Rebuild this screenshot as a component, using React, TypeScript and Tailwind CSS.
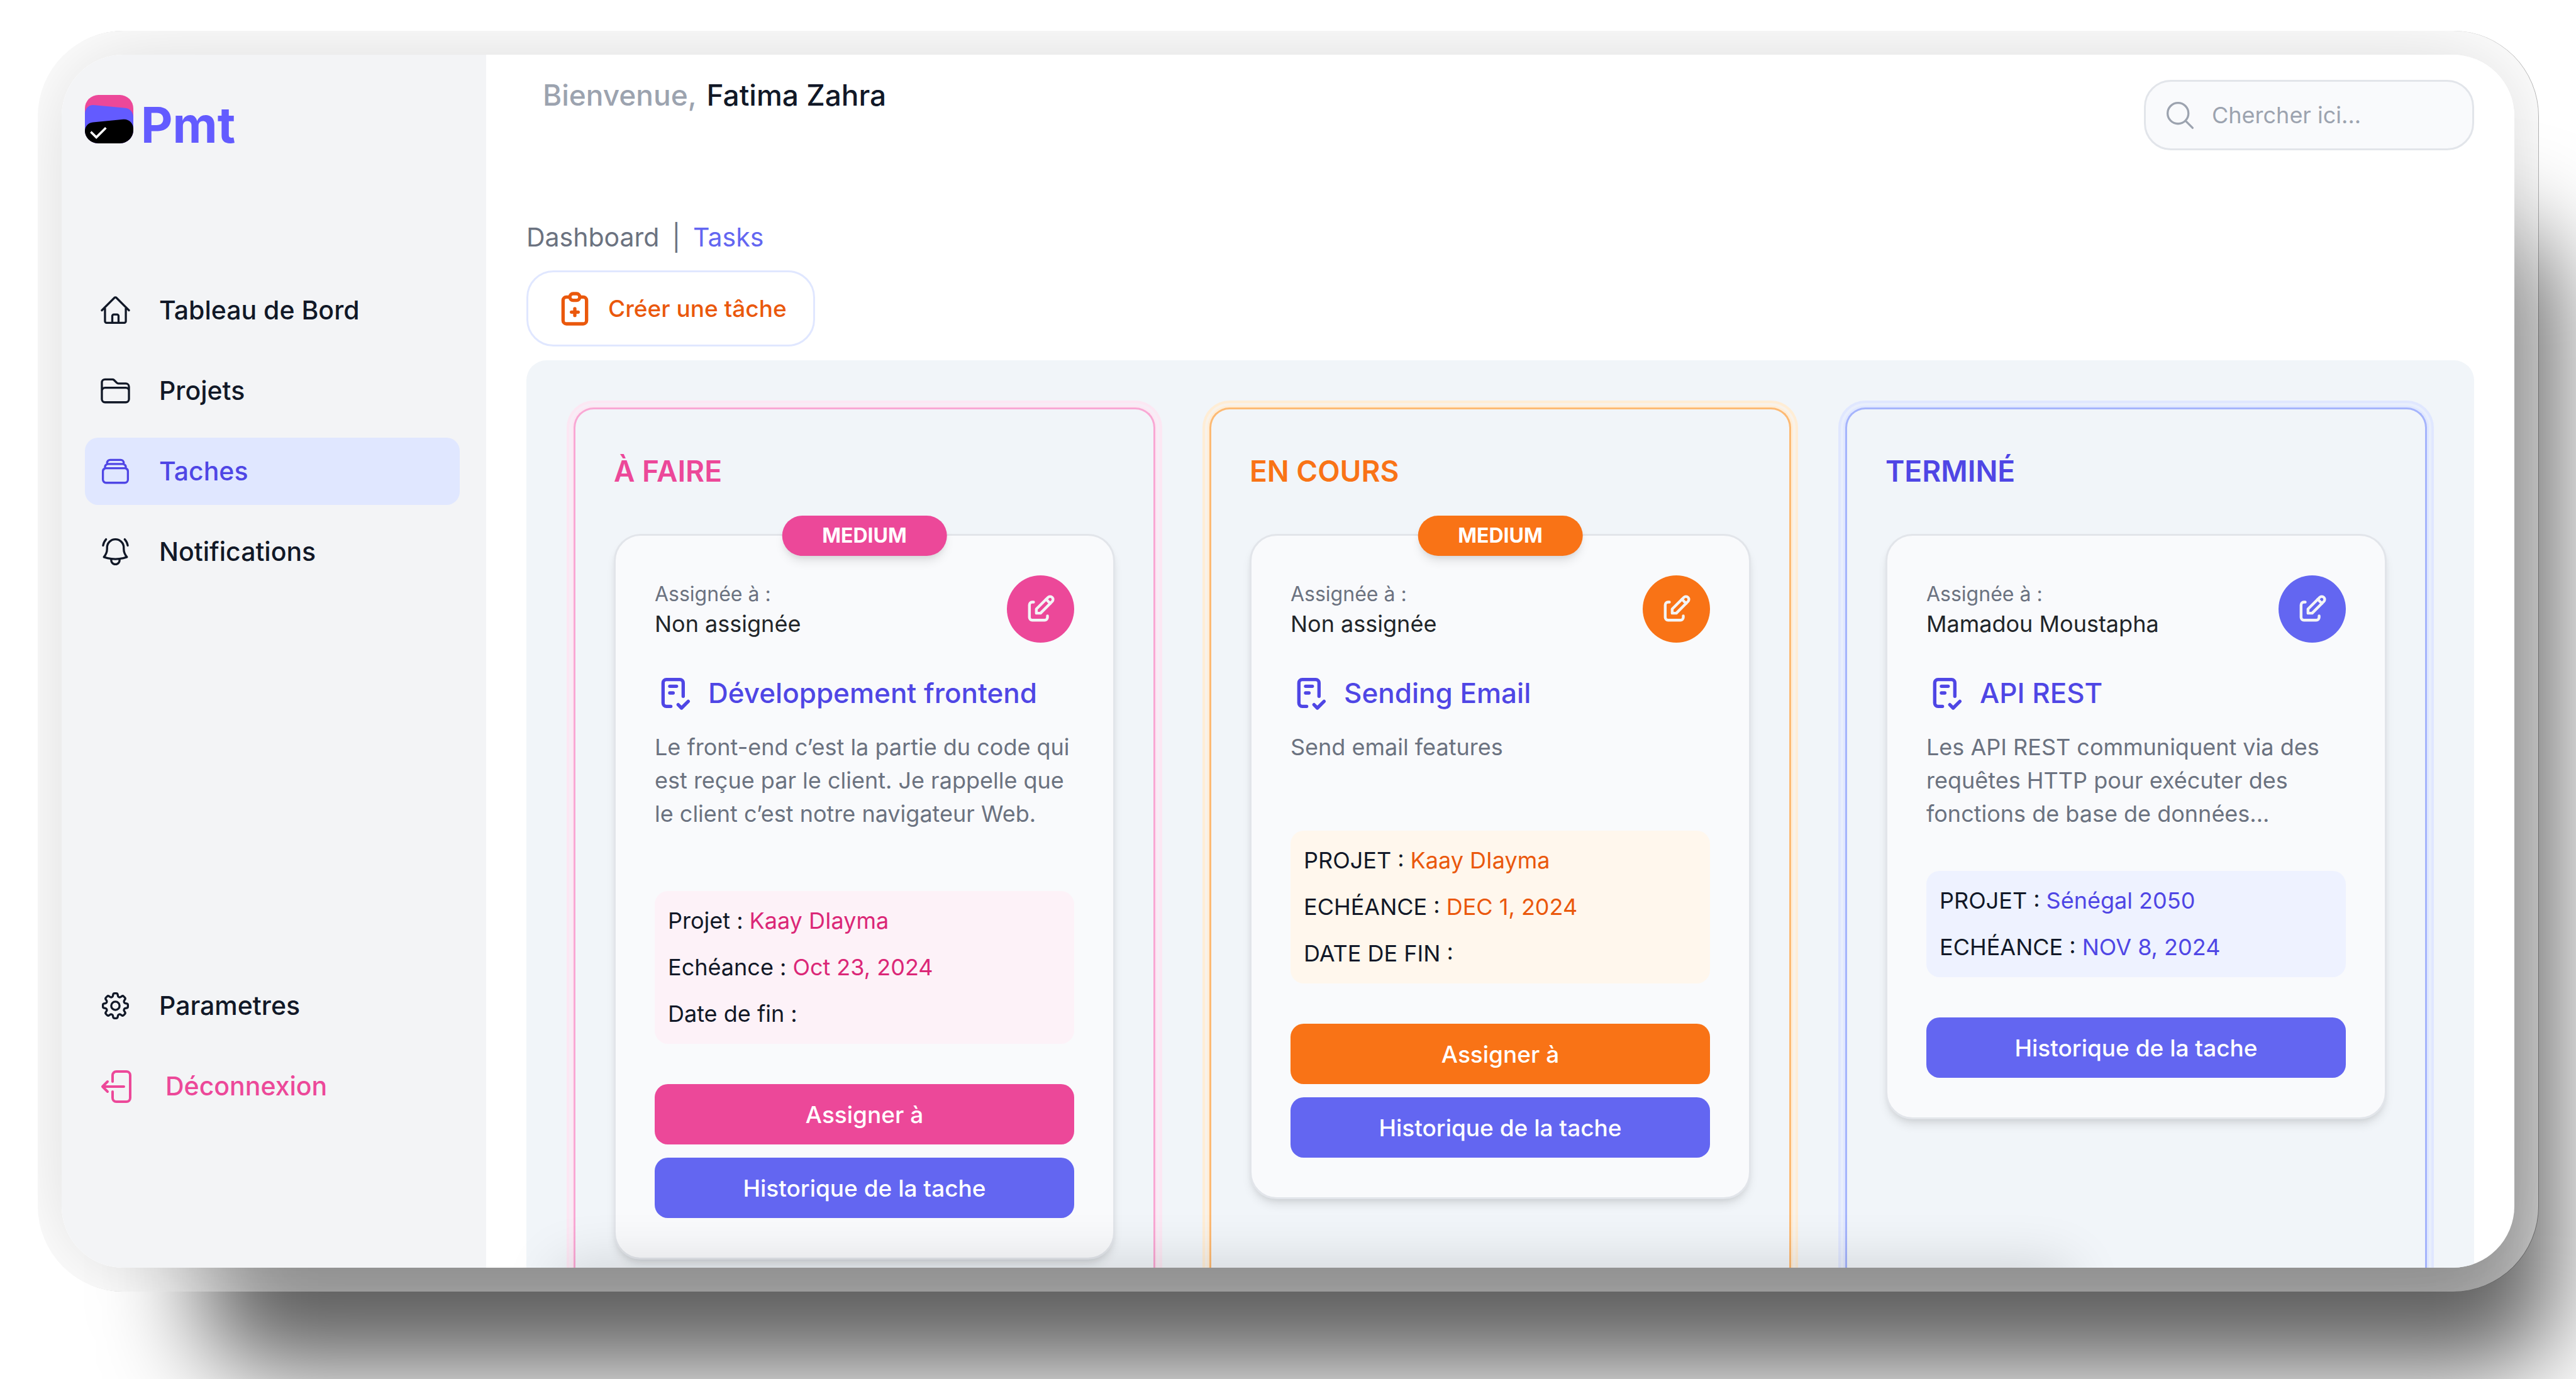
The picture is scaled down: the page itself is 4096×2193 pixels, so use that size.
import React from "react";
import {
  HiOutlineBellAlert,
  HiOutlineCog8Tooth,
  HiOutlineFolder,
  HiOutlineHome,
  HiOutlineMagnifyingGlass,
  HiOutlineRectangleStack,
} from "react-icons/hi2";
import { TbChecklist, TbClipboardPlus, TbEdit } from "react-icons/tb";
import type { IconType } from "react-icons";

type Task = {
  priority?: string;
  assignee: string;
  title: string;
  description: string;
  descriptionClass: string;
  details: { label: string; value: string }[];
  assignable: boolean;
};

type Column = {
  title: string;
  titleClass: string;
  frameClass: string;
  solidClass: string;
  detailsClass: string;
  valueClass: string;
  task: Task;
};

const columns: Column[] = [
  {
    title: "À FAIRE",
    titleClass: "text-[#ec4899]",
    frameClass:
      "border-[#f9a8d4] shadow-[0_0_0_3px_#fce7f3,0_0_0_7px_#f7edf6,0_0_0_11px_#fce7f3]",
    solidClass: "bg-[#ec4899]",
    detailsClass: "bg-[#fdf2f8]",
    valueClass: "text-[#db2777]",
    task: {
      priority: "MEDIUM",
      assignee: "Non assignée",
      title: "Développement frontend",
      description:
        "Le front-end c’est la partie du code qui est reçue par le client. Je rappelle que le client c’est notre navigateur Web.",
      descriptionClass: "mb-24",
      details: [
        { label: "Projet :", value: "Kaay DIayma" },
        { label: "Echéance :", value: "Oct 23, 2024" },
        { label: "Date de fin :", value: "" },
      ],
      assignable: true,
    },
  },
  {
    title: "EN COURS",
    titleClass: "text-[#f97316]",
    frameClass:
      "border-[#fdba74] shadow-[0_0_0_3px_#ffedd5,0_0_0_7px_#f8f2ea,0_0_0_11px_#ffedd5]",
    solidClass: "bg-[#f97316]",
    detailsClass: "bg-[#fff7ed]",
    valueClass: "text-[#ea580c]",
    task: {
      priority: "MEDIUM",
      assignee: "Non assignée",
      title: "Sending Email",
      description: "Send email features",
      descriptionClass: "mb-[106px]",
      details: [
        { label: "PROJET :", value: "Kaay DIayma" },
        { label: "ECHÉANCE :", value: "DEC 1, 2024" },
        { label: "DATE DE FIN :", value: "" },
      ],
      assignable: true,
    },
  },
  {
    title: "TERMINÉ",
    titleClass: "text-[#4f46e5]",
    frameClass:
      "border-[#a5b4fc] shadow-[0_0_0_3px_#e0e7ff,0_0_0_7px_#e9effc,0_0_0_11px_#e0e7ff]",
    solidClass: "bg-[#6366f1]",
    detailsClass: "bg-[#eef2ff]",
    valueClass: "text-[#4f46e5]",
    task: {
      assignee: "Mamadou Moustapha",
      title: "API REST",
      description:
        "Les API REST communiquent via des requêtes HTTP pour exécuter des fonctions de base de données...",
      descriptionClass: "mb-16",
      details: [
        { label: "PROJET :", value: "Sénégal 2050" },
        { label: "ECHÉANCE :", value: "NOV 8, 2024" },
      ],
      assignable: false,
    },
  },
];

function Logo() {
  return (
    <a href="#" className="flex items-end gap-3" aria-label="Pmt">
      <svg viewBox="0 0 108 108" className="size-[77px]" aria-hidden="true">
        <rect width="108" height="108" rx="30" fill="#ec4899" />
        <path
          d="M0 42C0 31 8 22 19 22.500L90 29C101 30 108 39 108 50V78C108 95 95 108 78 108H30C13 108 0 95 0 78Z"
          fill="#635bff"
        />
        <path
          d="M0 80C0 70 8 61.500 18 61L86 54.500C98 53.500 108 63 108 75V78C108 95 95 108 78 108H30C13 108 0 95 0 80Z"
          fill="#000"
        />
        <path
          d="M15 84L25.500 94.500L45 75"
          fill="none"
          stroke="#fff"
          strokeWidth="5"
          strokeLinecap="square"
        />
      </svg>
      <span className="text-[78px] leading-[58px] font-bold text-[#635bff]">Pmt</span>
    </a>
  );
}

function NavItem({
  icon: Icon,
  label,
  active = false,
}: {
  icon: IconType;
  label: string;
  active?: boolean;
}) {
  return (
    <a
      href="#"
      aria-current={active ? "page" : undefined}
      className={
        active
          ? "flex h-[107px] items-center gap-[43px] rounded-[21px] bg-[#e0e7ff] px-[22px] text-[#4f46e5]"
          : "flex h-[107px] items-center gap-[43px] rounded-[21px] px-[22px] text-[#111827]"
      }
    >
      <Icon className="size-[53px] shrink-0" />
      <span className="text-[41px] font-medium">{label}</span>
    </a>
  );
}

function LogoutIcon() {
  return (
    <svg
      viewBox="0 0 24 24"
      fill="none"
      stroke="currentColor"
      strokeWidth="1.500"
      strokeLinecap="round"
      strokeLinejoin="round"
      className="size-16 shrink-0"
      aria-hidden="true"
    >
      <path d="M8.250 9V5.250A2.250 2.250 0 0 1 10.500 3h6a2.250 2.250 0 0 1 2.250 2.250v13.500A2.250 2.250 0 0 1 16.500 21h-6a2.250 2.250 0 0 1-2.250-2.250V15m-3 0-3-3m0 0 3-3m-3 3H15" />
    </svg>
  );
}

function Sidebar() {
  return (
    <aside className="flex w-[675px] shrink-0 flex-col bg-[#f3f4f6] pt-16 pr-[42px] pb-[235px] pl-[37px]">
      <Logo />
      <nav className="mt-[212px] flex flex-1 flex-col gap-[21px]">
        <NavItem icon={HiOutlineHome} label="Tableau de Bord" />
        <NavItem icon={HiOutlineFolder} label="Projets" />
        <NavItem icon={HiOutlineRectangleStack} label="Taches" active />
        <NavItem icon={HiOutlineBellAlert} label="Notifications" />
        <div className="mt-auto flex flex-col gap-[21px]">
          <NavItem icon={HiOutlineCog8Tooth} label="Parametres" />
          <button
            type="button"
            className="flex h-[107px] items-center gap-[42px] px-[22px] text-[#ec4899]"
          >
            <LogoutIcon />
            <span className="text-[41px] font-medium">Déconnexion</span>
          </button>
        </div>
      </nav>
    </aside>
  );
}

function Header() {
  return (
    <header className="flex items-start justify-between">
      <p className="pl-[26px] text-[46px] leading-[64px] font-medium text-[#9ca3af]">
        Bienvenue, <span className="ml-1 text-[#111827]">Fatima Zahra</span>
      </p>
      <label className="mt-2 flex h-[112px] w-[525px] items-center gap-6 rounded-[43px] border-[3px] border-[#e2e5ea] bg-[#f9fafc] px-7 text-[#9ca3af]">
        <HiOutlineMagnifyingGlass className="size-[53px] shrink-0" />
        <input
          type="search"
          aria-label="Chercher"
          placeholder="Chercher ici..."
          className="min-w-0 flex-1 bg-transparent text-[36px] outline-none placeholder:text-[#9ca3af]"
        />
      </label>
    </header>
  );
}

function TaskCard({ task, column }: { task: Task; column: Column }) {
  return (
    <article className="relative rounded-[43px] border-[3px] border-[#e2e5ea] bg-[#f9fafc] px-[62px] py-[63px] shadow-[0_11px_16px_-3px_rgba(0,0,0,0.1),0_5px_11px_-5px_rgba(0,0,0,0.1)]">
      {task.priority && (
        <span
          className={`absolute top-0 left-1/2 -translate-x-1/2 -translate-y-1/2 rounded-full px-16 text-[32px] leading-[64px] font-bold text-white shadow-[0_11px_16px_-3px_rgba(0,0,0,0.1),0_5px_11px_-5px_rgba(0,0,0,0.1)] ${column.solidClass}`}
        >
          {task.priority}
        </span>
      )}
      <div className="flex h-[107px] items-center justify-between">
        <div className="flex flex-col pt-1">
          <span className="text-[32px] leading-[43px] text-[#6b7280]">Assignée à :</span>
          <span className="text-[36px] leading-[53px] text-[#212529]">{task.assignee}</span>
        </div>
        <button
          type="button"
          aria-label={`Modifier ${task.title}`}
          className={`flex size-[107px] items-center justify-center rounded-full text-[#f3f4f6] ${column.solidClass}`}
        >
          <TbEdit className="size-[53px]" />
        </button>
      </div>
      <h3 className="mt-12 flex items-center gap-[21px] text-[44px] leading-[64px] font-medium text-[#4f46e5]">
        <TbChecklist className="size-16 shrink-0" />
        {task.title}
      </h3>
      <p
        className={`mt-7 text-[36px] leading-[53px] text-[#6b7280] ${task.descriptionClass}`}
      >
        {task.description}
      </p>
      <dl
        className={`flex flex-col gap-[21px] rounded-[21px] p-[21px] text-[36px] leading-[53px] ${column.detailsClass}`}
      >
        {task.details.map((detail) => (
          <div key={detail.label} className="flex gap-2.5">
            <dt className="text-[#111827]">{detail.label}</dt>
            <dd className={column.valueClass}>{detail.value}</dd>
          </div>
        ))}
      </dl>
      <div className="mt-16 flex flex-col gap-[21px] text-[37px] leading-[53px] font-medium text-white">
        {task.assignable && (
          <button type="button" className={`h-24 rounded-[21px] ${column.solidClass}`}>
            Assigner à
          </button>
        )}
        <button type="button" className="h-24 rounded-[21px] bg-[#6366f1]">
          Historique de la tache
        </button>
      </div>
    </article>
  );
}

export default function App() {
  return (
    <div className="relative flex h-screen overflow-hidden bg-white px-[60px] pt-[49px] pb-[139px] font-[Inter,sans-serif]">
      <div
        aria-hidden="true"
        className="absolute top-[364px] right-[36px] bottom-[18px] left-[320px] rounded-[100px] bg-black/64 blur-[80px]"
      />
      <div className="relative flex min-w-0 flex-1 overflow-hidden rounded-[136px] bg-white/40 p-[38px] shadow-[1px_0_0_rgba(0,0,0,0.3)]">
        <div className="relative flex min-w-0 flex-1 rounded-[98px] shadow-[0_0_140px_rgba(0,0,0,0.15)]">
          <div className="relative flex min-w-0 flex-1 overflow-hidden rounded-[98px] bg-white">
            <Sidebar />
            <main className="relative flex min-w-0 flex-1 flex-col px-16 pt-8">
              <Header />
              <nav
                aria-label="Fil d’Ariane"
                className="mt-[106px] flex gap-5 text-[41px] leading-[64px] text-[#6b7280]"
              >
                <a href="#">Dashboard</a>
                <span>|</span>
                <a href="#" aria-current="page" className="text-[#6366f1]">
                  Tasks
                </a>
              </nav>
              <button
                type="button"
                className="mt-[21px] flex h-[121px] items-center gap-[21px] self-start rounded-[43px] border-[3px] border-[#e0e7ff] px-[42px] text-[37px] font-medium text-[#ea580c]"
              >
                <TbClipboardPlus className="size-16" />
                Créer une tâche
              </button>
              <div className="mt-[22px] grid min-h-0 flex-1 grid-cols-3 gap-[86px] rounded-t-[32px] bg-[#f1f5f9] px-[75px] pt-[75px]">
                {columns.map((column) => (
                  <section
                    key={column.title}
                    className={`rounded-t-[32px] border-[3px] border-b-0 px-[61px] pt-[61px] ${column.frameClass}`}
                  >
                    <h2
                      className={`mb-[62px] text-[46px] leading-[75px] font-semibold ${column.titleClass}`}
                    >
                      {column.title}
                    </h2>
                    <TaskCard task={column.task} column={column} />
                  </section>
                ))}
              </div>
              <div
                aria-hidden="true"
                className="pointer-events-none absolute top-full right-[22%] left-[116px] h-20 shadow-[0_0_90px_rgba(0,0,0,0.16)]"
              />
            </main>
          </div>
        </div>
      </div>
    </div>
  );
}
